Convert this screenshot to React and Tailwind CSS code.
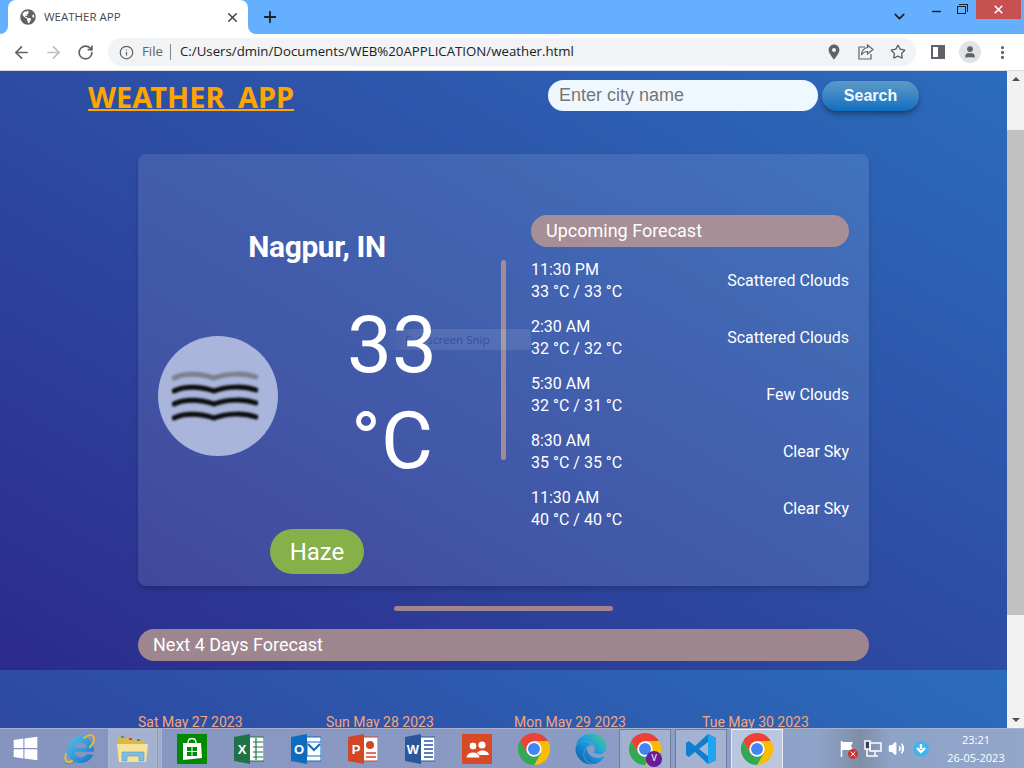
import { ArrowLeft, ArrowRight, RotateCw, Info, Star, MoreVertical, ChevronDown, Plus, X, Minus, User, Volume2 } from "lucide-react";
import { FaWindows, FaInternetExplorer, FaEdge, FaGlobeAmericas } from "react-icons/fa";

const forecast = [
  { time: "11:30 PM", temp: "33 °C / 33 °C", desc: "Scattered Clouds" },
  { time: "2:30 AM", temp: "32 °C / 32 °C", desc: "Scattered Clouds" },
  { time: "5:30 AM", temp: "32 °C / 31 °C", desc: "Few Clouds" },
  { time: "8:30 AM", temp: "35 °C / 35 °C", desc: "Clear Sky" },
  { time: "11:30 AM", temp: "40 °C / 40 °C", desc: "Clear Sky" },
];

const days = ["Sat May 27 2023", "Sun May 28 2023", "Mon May 29 2023", "Tue May 30 2023"];

function Chrome({ size = 32 }) {
  return (
    <svg width={size} height={size} viewBox="0 0 48 48">
      <path d="M3.2 12A24 24 0 0 1 44.8 12H24L13.6 30Z" fill="#ea4335" />
      <path d="M44.8 12A24 24 0 0 1 24 48L34.4 30L24 12Z" fill="#fbbc04" />
      <path d="M24 48A24 24 0 0 1 3.2 12L13.6 30H34.4Z" fill="#34a853" />
      <circle cx="24" cy="24" r="11.5" fill="#fff" />
      <circle cx="24" cy="24" r="9" fill="#4285f4" />
    </svg>
  );
}

function HazeIcon() {
  const wave = "M2 8 C12 3 28 3 42 8 C56 3 72 3 84 7";
  return (
    <svg width="86" height="52" viewBox="0 0 86 52" fill="none" className="blur-[0.8px]">
      <path d={wave} stroke="#7d7f8a" strokeWidth="5" strokeLinecap="round" />
      <path d={wave} transform="translate(0 13)" stroke="#0c0c0c" strokeWidth="5" strokeLinecap="round" />
      <path d={wave} transform="translate(0 26)" stroke="#0c0c0c" strokeWidth="5" strokeLinecap="round" />
      <path d={wave} transform="translate(0 40)" stroke="#0c0c0c" strokeWidth="5" strokeLinecap="round" />
    </svg>
  );
}

function OfficeIcon({ letter, dark, light, children }) {
  return (
    <svg width="30" height="30" viewBox="0 0 30 30">
      <rect x="12" y="3" width="18" height="24" fill="#fff" stroke={light} strokeWidth="1" />
      {children}
      <path d="M0 3L16 0V30L0 27Z" fill={dark} />
      <text x="8" y="20" textAnchor="middle" fontFamily="Liberation Sans, sans-serif" fontWeight="700" fontSize="13" fill="#fff">
        {letter}
      </text>
    </svg>
  );
}

function Folder() {
  return (
    <svg width="32" height="28" viewBox="0 0 32 28">
      <path d="M1 3H12L14 5H27V24H1Z" fill="#d9b64f" />
      <rect x="4" y="1" width="3" height="2" fill="#3aa655" />
      <rect x="12" y="3" width="3" height="2" fill="#d8443a" />
      <rect x="20" y="4" width="3" height="2" fill="#2f8fd8" />
      <path d="M0 9H31L29 27H2Z" fill="#f6e39a" />
      <path d="M5 26V17H27V26H22V21H10V26Z" fill="#7fbde0" stroke="#5a9cc8" strokeWidth="0.6" />
    </svg>
  );
}

function TaskItem({ width = "w-[57px]", boxed, active, children }) {
  return (
    <div
      className={`flex h-[40px] shrink-0 items-center justify-center ${width} ${boxed ? "border border-[#6f7d9f] bg-white/20" : ""} ${active ? "border-[#e8edf5] bg-white/40" : ""}`}
    >
      {children}
    </div>
  );
}

export default function App() {
  return (
    <div className="flex h-screen w-[1024px] flex-col overflow-hidden bg-white font-['Roboto',sans-serif]">
      {/* tabs */}
      <div className="relative flex h-[34px] shrink-0 items-start bg-[#64b0ff]">
        <div className="relative ml-2 flex h-[34px] w-[240px] items-center rounded-t-lg bg-white pl-3 pr-2">
          <div className="absolute -left-2 bottom-0 h-2 w-2 bg-white">
            <div className="h-full w-full rounded-br-lg bg-[#64b0ff]" />
          </div>
          <div className="absolute -right-2 bottom-0 h-2 w-2 bg-white">
            <div className="h-full w-full rounded-bl-lg bg-[#64b0ff]" />
          </div>
          <FaGlobeAmericas size={16} className="text-[#5f6368]" />
          <span className="ml-2 font-['Open_Sans',sans-serif] text-[11.5px] text-[#45494e]">WEATHER APP</span>
          <X size={15} strokeWidth={2.6} className="ml-auto text-[#45494e]" />
        </div>
        <Plus size={18} strokeWidth={2.4} className="ml-[13px] mt-[8px] text-[#202124]" />
        <ChevronDown size={17} strokeWidth={2.4} className="ml-auto mr-[116px] mt-[8px] text-[#202124]" />
        <Minus size={13} strokeWidth={3} className="absolute left-[930px] top-[5px] text-[#202124]" />
        <div className="absolute left-[957px] top-[6px] h-[8px] w-[9px] border border-[#202124]" />
        <div className="absolute left-[959px] top-[4px] h-[8px] w-[9px] border-t border-r border-[#202124]" />
        <div className="absolute left-[976px] top-0 flex h-[19px] w-[45px] items-center justify-center bg-[#c75050]">
          <X size={13} strokeWidth={3} className="text-white" />
        </div>
      </div>

      {/* toolbar */}
      <div className="flex h-[37px] shrink-0 items-center border-b border-[#dadce0] bg-white">
        <ArrowLeft size={19} strokeWidth={2.2} className="ml-[12px] text-[#5f6368]" />
        <ArrowRight size={19} strokeWidth={2.2} className="ml-[13px] text-[#bcbfc3]" />
        <RotateCw size={17} strokeWidth={2.4} className="ml-[14px] text-[#5f6368]" />
        <div className="ml-[14px] flex h-[28px] w-[808px] items-center rounded-full bg-[#f1f3f4] pl-[11px] pr-[10px]">
          <Info size={15} strokeWidth={2} className="text-[#5f6368]" />
          <span className="ml-[8px] font-['Open_Sans',sans-serif] text-[13.25px] text-[#5f6368]">File</span>
          <span className="ml-[7px] h-[16px] w-px bg-[#80868b]" />
          <span className="ml-[9px] font-['Open_Sans',sans-serif] text-[13.25px] text-[#202124]">
            C:/Users/dmin/Documents/WEB%20APPLICATION/weather.html
          </span>
          <svg width="16" height="16" viewBox="0 0 16 16" className="ml-auto">
            <path fillRule="evenodd" d="M8 0.5C4.9 0.5 2.6 2.9 2.6 6C2.6 9.6 8 15.5 8 15.5S13.4 9.6 13.4 6C13.4 2.9 11.1 0.5 8 0.5ZM8 4A2 2 0 1 1 8 8A2 2 0 1 1 8 4Z" fill="#5f6368" />
          </svg>
          <svg width="16" height="16" viewBox="0 0 16 16" fill="none" stroke="#5f6368" strokeWidth="1.2" className="ml-[16px]">
            <path d="M7 3H1V15H13V10" />
            <path d="M9.5 1L15 5.5L9.5 10V7.5C7 7.5 5 8.5 3.5 11C3.8 7 6 4 9.5 3.5Z" />
          </svg>
          <Star size={16} strokeWidth={2} className="ml-[16px] text-[#5f6368]" />
        </div>
        <div className="ml-[15px] flex h-[14px] w-[14px] justify-end border-2 border-[#5f6368] bg-white">
          <div className="h-full w-[5px] bg-[#5f6368]" />
        </div>
        <div className="ml-[14px] flex h-[22px] w-[22px] items-center justify-center rounded-full bg-[#e1e3e6]">
          <User size={14} strokeWidth={2} fill="#5f6368" className="text-[#5f6368]" />
        </div>
        <MoreVertical size={17} strokeWidth={2.6} className="ml-[13px] text-[#5f6368]" />
      </div>

      {/* viewport + scrollbar */}
      <div className="flex h-[657px] shrink-0">
        <div className="relative h-full w-[1007px] overflow-hidden bg-linear-to-tr from-[#2b2a8a] to-[#2b6cbc] bg-[length:100%_599px] bg-repeat">
          <div className="flex h-[599px] flex-col">
            <header className="flex items-center justify-between px-[88px] pt-[9px]">
              <a className="pb-[2px] font-['Noto_Sans',sans-serif] text-[29px] font-bold leading-[32px] text-[#ffa500] underline decoration-2 underline-offset-[1px] [word-spacing:6px]">
                WEATHER APP
              </a>
              <div className="mb-[4px] flex items-end gap-1">
                <div className="flex h-[31px] w-[270px] items-center rounded-full bg-[#f0f8ff] px-[11px] font-['Liberation_Sans',sans-serif] text-[18px] text-[#757575]">
                  Enter city name
                </div>
                <button className="h-[30px] w-[97px] rounded-full bg-linear-to-b from-[#5b9ac8] to-[#0a6fbf] font-['Liberation_Sans',sans-serif] text-[16px] font-bold text-[#f0f8ff] shadow-md shadow-black/30">
                  Search
                </button>
              </div>
            </header>

            <section className="relative mx-[138px] mt-[39px] flex h-[432px] shrink-0 rounded-lg bg-white/10 shadow-md shadow-black/15">
              <div className="absolute left-[240px] top-[175px] flex h-[21px] w-[153px] items-center rounded-r-sm bg-linear-to-r from-transparent to-white/10 to-25% pl-[27px] font-['Open_Sans',sans-serif] text-[11.5px] text-[#3450a0]">
                Full-screen Snip
              </div>
              <div className="relative flex w-[358px] flex-col px-5 pt-[75px]">
                <h2 className="text-center text-[30px] font-bold leading-9 tracking-[-0.4px] text-white">Nagpur, IN</h2>
                <div className="mt-[32px] flex items-center">
                  <div className="mt-[6px] flex h-[120px] w-[120px] shrink-0 items-center justify-center rounded-full bg-[#a9b5da] pr-[6px]">
                    <HazeIcon />
                  </div>
                  <div className="ml-[28px] w-[172px] shrink-0 text-center text-[80px] leading-[96px] text-white">33 °C</div>
                </div>
                <div className="mx-auto mt-[40px] flex h-[45px] w-[94px] items-center justify-center rounded-full bg-[#86b049] text-[24px] text-white">
                  Haze
                </div>
              </div>
              <div className="ml-[5px] mt-[106px] h-[200px] w-[5px] rounded-full bg-[#a08c98]" />
              <div className="ml-[25px] w-[318px] pt-[61px]">
                <div className="flex h-[32px] items-center rounded-full bg-[#a68f96] pb-px pl-[15px] text-[18px] text-white">Upcoming Forecast</div>
                <div className="mt-[12px] flex flex-col gap-[13px]">
                  {forecast.map((f) => (
                    <div key={f.time} className="flex items-center justify-between text-[16px] leading-[22px] text-white">
                      <div>
                        <p>{f.time}</p>
                        <p>{f.temp}</p>
                      </div>
                      <p>{f.desc}</p>
                    </div>
                  ))}
                </div>
              </div>
            </section>

            <div className="mx-auto mt-[20px] h-[5px] w-[219px] shrink-0 rounded-full bg-[#a0858f]" />
            <div className="mx-[138px] mt-[18px] flex h-[32px] shrink-0 items-center rounded-full bg-[#9e868f] pb-px pl-[15px] text-[18px] text-white">
              Next 4 Days Forecast
            </div>
          </div>

          <div className="mx-[138px] mt-[44px] flex">
            {days.map((d) => (
              <p key={d} className="w-[188px] shrink-0 text-[14px] leading-4 text-[#f4a77c]">{d}</p>
            ))}
          </div>
        </div>

        <div className="relative flex w-[17px] flex-col bg-[#f1f1f1]">
          <div className="mx-auto mt-[6px] h-0 w-0 border-x-[4px] border-b-[4px] border-x-transparent border-b-[#505050]" />
          <div className="absolute left-0 top-[59px] h-[485px] w-full bg-[#c1c1c1]" />
          <div className="mx-auto mb-[6px] mt-auto h-0 w-0 border-x-[4px] border-t-[4px] border-x-transparent border-t-[#505050]" />
        </div>
      </div>

      {/* taskbar */}
      <div className="flex h-[40px] shrink-0 items-center border-t border-[#a6b2d0] bg-[linear-gradient(90deg,#8595c0_0%,#8a9ac3_50%,#8ea3c8_80%,#7f8ea8_84%,#8ea3c8_87%,#92a6ca_100%)]">
        <TaskItem width="w-[50px]">
          <FaWindows size={27} className="text-white" />
        </TaskItem>
        <TaskItem>
          <svg width="0" height="0" className="absolute">
            <defs>
              <linearGradient id="ieFill" x1="0" y1="0" x2="1" y2="1">
                <stop offset="0" stopColor="#5cc8f2" />
                <stop offset="1" stopColor="#1273c4" />
              </linearGradient>
              <linearGradient id="edgeFill" x1="1" y1="0" x2="0" y2="1">
                <stop offset="0" stopColor="#4fd18a" />
                <stop offset="0.45" stopColor="#1b9de2" />
                <stop offset="1" stopColor="#0c59a4" />
              </linearGradient>
            </defs>
          </svg>
          <div className="relative">
            <FaInternetExplorer size={30} fill="url(#ieFill)" />
            <svg width="32" height="32" viewBox="0 0 32 32" fill="none" className="absolute -left-px -top-px">
              <path d="M3 21C1 27 3 31 9 28M21 5C26 1 31 1 31 6C31 9 29 12 27 14" stroke="#f2b632" strokeWidth="2" strokeLinecap="round" />
            </svg>
          </div>
        </TaskItem>
        <div className="ml-px flex h-[40px] w-[55px] shrink-0">
          <div className="flex w-[49px] items-center justify-center border border-[#a9b4cf] bg-white/25">
            <Folder />
          </div>
          <div className="ml-px w-[4px] border border-[#a9b4cf] bg-white/20" />
        </div>
        <TaskItem>
          <svg width="30" height="30" viewBox="0 0 30 30">
            <rect width="30" height="30" fill="#008a00" />
            <path d="M11 9C11 3 19 3 19 9" fill="none" stroke="#fff" strokeWidth="1.3" />
            <path d="M6 9H24L25 24L6 26Z" fill="#fff" />
            <path d="M10 13H14.5V17H10ZM15.5 13H20V17H15.5ZM10 18H14.5V22H10ZM15.5 18H20V22H15.5Z" fill="#008a00" />
          </svg>
        </TaskItem>
        <TaskItem>
          <OfficeIcon letter="X" dark="#217346" light="#217346">
            <path d="M19 8H29M19 13H29M19 18H29M19 23H29M22 4V26" stroke="#217346" strokeWidth="1.2" />
          </OfficeIcon>
        </TaskItem>
        <TaskItem>
          <OfficeIcon letter="O" dark="#0f6cbd" light="#0f6cbd">
            <path d="M16 8H30V22H16Z" fill="#fff" stroke="#0f6cbd" />
            <path d="M17 10L23 16L29 10" stroke="#0f6cbd" strokeWidth="2" fill="none" />
          </OfficeIcon>
        </TaskItem>
        <TaskItem>
          <OfficeIcon letter="P" dark="#d24726" light="#d24726">
            <circle cx="22" cy="11" r="4" fill="#d24726" />
            <path d="M18 19H28M18 23H28" stroke="#d24726" strokeWidth="1.4" />
          </OfficeIcon>
        </TaskItem>
        <TaskItem>
          <OfficeIcon letter="W" dark="#2b579a" light="#2b579a">
            <path d="M19 7H28M19 11H28M19 15H28M19 19H28M19 23H28" stroke="#2b579a" strokeWidth="1.4" />
          </OfficeIcon>
        </TaskItem>
        <TaskItem>
          <svg width="30" height="30" viewBox="0 0 30 30">
            <rect width="30" height="30" fill="#d84a26" />
            <circle cx="20" cy="11" r="3.6" fill="#fff" />
            <path d="M14 21C15 15 26 15 27 21Z" fill="#fff" />
            <circle cx="11" cy="12" r="4" fill="#fff" stroke="#d84a26" />
            <path d="M4 24C5 16 17 16 18 24Z" fill="#fff" stroke="#d84a26" />
          </svg>
        </TaskItem>
        <TaskItem>
          <Chrome />
        </TaskItem>
        <TaskItem>
          <FaEdge size={32} fill="url(#edgeFill)" />
        </TaskItem>
        <TaskItem width="w-[52px] mr-[4px]" boxed>
          <div className="relative">
            <Chrome />
            <span className="absolute -bottom-[2px] -right-[1px] flex h-4 w-4 items-center justify-center rounded-full bg-[#6a1b9a] text-[9px] leading-none text-white">V</span>
          </div>
        </TaskItem>
        <TaskItem width="w-[52px] mr-[4px]" boxed>
          <svg width="32" height="32" viewBox="0 0 32 32">
            <path d="M23 1L31 5V27L23 31L10 19L4 24L1 22V10L4 8L10 13Z" fill="#0e7fd0" />
            <path d="M23 1L31 5V27L23 31Z" fill="#20a5f0" />
            <path d="M23 9V23L14 16Z" fill="#a5b8d3" />
          </svg>
        </TaskItem>
        <TaskItem width="w-[52px]" boxed active>
          <Chrome />
        </TaskItem>

        <div className="ml-auto flex items-center">
          <div className="relative h-[16px] w-[14px]">
            <svg width="16" height="17" viewBox="0 0 16 17">
              <path d="M1.5 0V16" stroke="#fff" strokeWidth="1.5" />
              <path d="M2 1H13L11 5L13 9H2Z" fill="#fff" />
            </svg>
            <span className="absolute -bottom-[2px] -right-[4px] flex h-[10px] w-[10px] items-center justify-center rounded-full bg-[#d9302c]">
              <X size={8} strokeWidth={3} className="text-white" />
            </span>
          </div>
          <svg width="18" height="18" viewBox="0 0 18 18" fill="none" stroke="#fff" strokeWidth="1.5" className="ml-[10px]">
            <rect x="1" y="1" width="5" height="8" fill="#33415e" />
            <rect x="6" y="3" width="11" height="8" />
            <path d="M3 9V16H14M11 11V16" />
          </svg>
          <Volume2 size={17} strokeWidth={1.8} fill="#fff" className="ml-[6px] text-white" />
          <svg width="16" height="16" viewBox="0 0 16 16" className="ml-[8px]">
            <circle cx="8" cy="8" r="8" fill="#3fb6ea" />
            <path d="M8 3V8M4 7L8 11L12 7" stroke="#fff" strokeWidth="2.4" fill="none" />
          </svg>
          <div className="ml-[18px] mr-[19px] w-[58px] text-center font-['Open_Sans',sans-serif] text-[11px] leading-[18px] text-white">
            <p>23:21</p>
            <p>26-05-2023</p>
          </div>
        </div>
      </div>
    </div>
  );
}
